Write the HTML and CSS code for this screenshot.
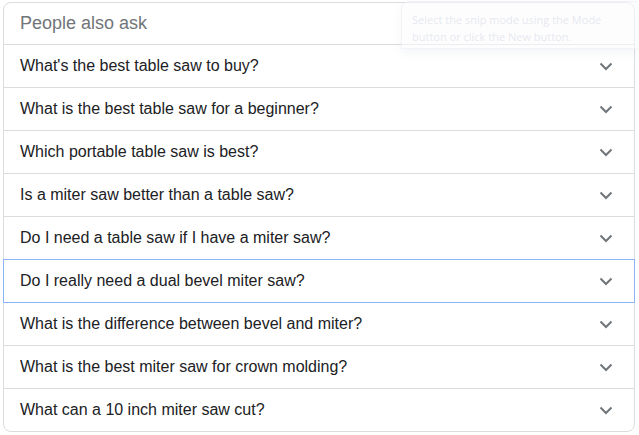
FILE: index.html
```html
<!DOCTYPE html>
<html>
<head>
<meta charset="utf-8">
<link rel="stylesheet" href="styles.css">
</head>
<body>
<div class="card">
  <div class="head">People also ask</div>
  <div class="row"><span>What's the best table saw to buy?</span><svg class="chev" viewBox="0 0 24 24"><path d="M6.5 9.5 12 15l5.5-5.5"/></svg></div>
  <div class="row"><span>What is the best table saw for a beginner?</span><svg class="chev" viewBox="0 0 24 24"><path d="M6.5 9.5 12 15l5.5-5.5"/></svg></div>
  <div class="row"><span>Which portable table saw is best?</span><svg class="chev" viewBox="0 0 24 24"><path d="M6.5 9.5 12 15l5.5-5.5"/></svg></div>
  <div class="row"><span>Is a miter saw better than a table saw?</span><svg class="chev" viewBox="0 0 24 24"><path d="M6.5 9.5 12 15l5.5-5.5"/></svg></div>
  <div class="row"><span>Do I need a table saw if I have a miter saw?</span><svg class="chev" viewBox="0 0 24 24"><path d="M6.5 9.5 12 15l5.5-5.5"/></svg></div>
  <div class="row active"><span>Do I really need a dual bevel miter saw?</span><svg class="chev" viewBox="0 0 24 24"><path d="M6.5 9.5 12 15l5.5-5.5"/></svg></div>
  <div class="row"><span>What is the difference between bevel and miter?</span><svg class="chev" viewBox="0 0 24 24"><path d="M6.5 9.5 12 15l5.5-5.5"/></svg></div>
  <div class="row"><span>What is the best miter saw for crown molding?</span><svg class="chev" viewBox="0 0 24 24"><path d="M6.5 9.5 12 15l5.5-5.5"/></svg></div>
  <div class="row"><span>What can a 10 inch miter saw cut?</span><svg class="chev" viewBox="0 0 24 24"><path d="M6.5 9.5 12 15l5.5-5.5"/></svg></div>
</div>
<div class="snip">Select the snip mode using the Mode button or click the New button.</div>
</body>
</html>
```
FILE: styles.css
```css
html, body {
  margin: 0;
  padding: 0;
  background: #fff;
}
body {
  font-family: "Liberation Sans", Arial, sans-serif;
  width: 639px;
  height: 435px;
  overflow: hidden;
  position: relative;
}
.card {
  margin: 2px 0 0 3px;
  width: 630px;
  border: 1px solid #dadce0;
  border-radius: 8px;
  background: #fff;
}
.head {
  height: 41px;
  padding-left: 16px;
  display: flex;
  align-items: center;
  font-size: 18px;
  color: #70757a;
}
.row {
  height: 42px;
  border-top: 1px solid #dadce0;
  display: flex;
  align-items: center;
  justify-content: space-between;
  padding: 0 16px 0 16px;
  font-size: 16px;
  color: #202124;
  position: relative;
}
.row span {
  line-height: 20px;
}
.chev {
  width: 24px;
  height: 24px;
  fill: none;
  stroke: #70757a;
  stroke-width: 2;
}
.row.active {
  border-top-color: #8ab4f8;
  box-shadow: -1px 0 0 #8ab4f8, 1px 0 0 #8ab4f8, 0 1px 0 #8ab4f8, -1px 1px 0 #8ab4f8, 1px 1px 0 #8ab4f8;
  z-index: 1;
}
.snip {
  position: absolute;
  left: 401px;
  top: 1px;
  width: 226px;
  height: 34px;
  padding: 9px 0 3px 10px;
  border: 1px solid rgba(220, 224, 235, 0.35);
  border-right: none;
  border-radius: 8px 0 0 0;
  background: rgba(252, 252, 254, 0.55);
  box-shadow: 0 4px 10px rgba(120, 130, 150, 0.08);
  font-family: "Open Sans", sans-serif;
  font-size: 11px;
  line-height: 17px;
  color: rgba(210, 214, 226, 0.55);
  overflow: hidden;
}
```
